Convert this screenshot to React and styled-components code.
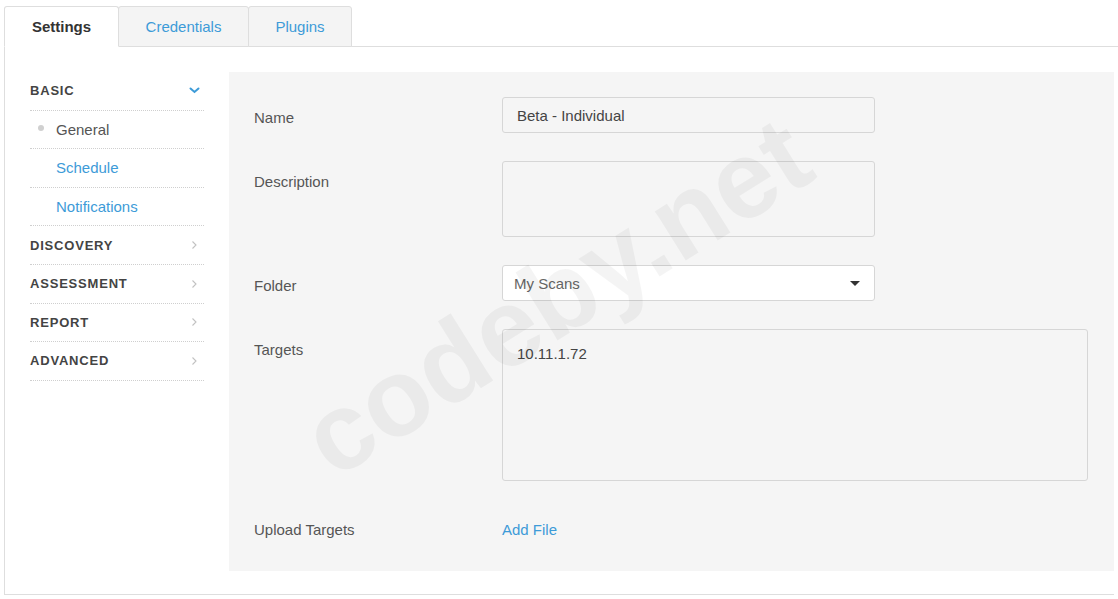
import styled, { createGlobalStyle } from 'styled-components';

const GlobalStyle = createGlobalStyle`
  html, body {
    margin: 0;
    padding: 0;
    background: #fff;
  }
  body {
    font-family: 'Liberation Sans', Arial, sans-serif;
    color: #555;
  }
`;

const Page = styled.div`
  position: relative;
  width: 1118px;
  height: 599px;
  padding: 6px 0 0 4px;
  box-sizing: border-box;
  overflow: hidden;
`;

const TabBar = styled.div`
  display: flex;
  margin-right: -4px;
  border-bottom: 1px solid #dedede;
  height: 40px;
`;

const Tab = styled.div`
  display: flex;
  align-items: center;
  justify-content: center;
  box-sizing: border-box;
  width: ${(p) => p.$w}px;
  height: 41px;
  margin-right: -1px;
  border: 1px solid #dedede;
  border-bottom: ${(p) => (p.$active ? '1px solid #fff' : '1px solid #dedede')};
  border-radius: 3px 3px 0 0;
  background: ${(p) => (p.$active ? '#fff' : '#f4f4f4')};
  color: ${(p) => (p.$active ? '#333' : '#3d9bd8')};
  font-size: 15px;
  font-weight: ${(p) => (p.$active ? 700 : 400)};
  position: relative;
  z-index: ${(p) => (p.$active ? 2 : 1)};
  cursor: pointer;
`;

const Card = styled.div`
  display: flex;
  width: 1110px;
  height: 548px;
  box-sizing: border-box;
  border-left: 1px solid #dedede;
  border-bottom: 1px solid #dedede;
  padding: 25px 0 23px 25px;
  gap: 25px;
`;

const Sidebar = styled.nav`
  width: 174px;
  flex-shrink: 0;
  display: flex;
  flex-direction: column;
`;

const NavRow = styled.div`
  display: flex;
  align-items: center;
  justify-content: space-between;
  height: 38.6px;
  box-sizing: border-box;
  border-bottom: 1px dotted #cfcfcf;
  padding-left: ${(p) => (p.$sub ? 26 : 0)}px;
  padding-right: 4px;
  position: relative;
`;

const SectionTitle = styled.span`
  font-size: 13px;
  font-weight: 700;
  letter-spacing: 0.8px;
  color: #444;
  text-transform: uppercase;
`;

const NavLink = styled.span`
  font-size: 15px;
  color: ${(p) => (p.$current ? '#555' : '#3d9bd8')};
  cursor: pointer;
`;

const Bullet = styled.span`
  position: absolute;
  left: 8px;
  top: 14px;
  width: 6px;
  height: 6px;
  border-radius: 50%;
  background: #d0d0d0;
`;

const Panel = styled.section`
  flex: 1;
  background: #f5f5f5;
  padding: 25px 26px 26px 25px;
  display: flex;
  flex-direction: column;
  gap: 28px;
`;

const FormRow = styled.div`
  display: flex;
  align-items: flex-start;
  min-height: 36px;
`;

const Label = styled.label`
  width: 248px;
  flex-shrink: 0;
  padding-top: 12px;
  font-size: 15px;
  line-height: 18px;
  color: #555;
`;

const Field = styled.div`
  box-sizing: border-box;
  width: ${(p) => p.$w}px;
  height: ${(p) => p.$h}px;
  border: 1px solid #d6d6d6;
  border-radius: 3px;
  background: ${(p) => (p.$white ? '#fff' : '#f5f5f5')};
  padding: ${(p) => p.$pad || '0 14px'};
  display: flex;
  align-items: ${(p) => (p.$top ? 'flex-start' : 'center')};
  justify-content: space-between;
  font-size: 15px;
  color: #444;
`;

const Placeholder = styled.span`
  color: #666;
`;

const Caret = styled.span`
  width: 0;
  height: 0;
  border-left: 5px solid transparent;
  border-right: 5px solid transparent;
  border-top: 5px solid #333;
  margin-right: 4px;
`;

const LinkText = styled.a`
  padding-top: 12px;
  font-size: 15px;
  line-height: 18px;
  color: #3d9bd8;
  text-decoration: none;
  cursor: pointer;
`;

const Watermark = styled.div`
  position: absolute;
  left: 556px;
  top: 296px;
  transform: translate(-50%, -50%) rotate(-32deg);
  font-family: 'Liberation Sans', Arial, sans-serif;
  font-weight: 700;
  font-size: 110px;
  color: rgba(0, 0, 0, 0.045);
  white-space: nowrap;
  pointer-events: none;
  user-select: none;
`;

const ChevronDown = () => (
  <svg width="11" height="7" viewBox="0 0 11 7">
    <path d="M1.5 1.5 L5.5 5 L9.5 1.5" fill="none" stroke="#3d9bd8" strokeWidth="2" strokeLinecap="round" />
  </svg>
);

const ChevronRight = () => (
  <svg width="10" height="10" viewBox="0 0 10 10" style={{ marginRight: 1 }}>
    <path d="M3.5 1.5 L7 5 L3.5 8.5" fill="none" stroke="#c2c2c2" strokeWidth="1.1" />
  </svg>
);

const sections = ['Discovery', 'Assessment', 'Report', 'Advanced'];

const App = () => {
  return (
    <>
      <GlobalStyle />
      <Page>
        <TabBar>
          <Tab $active $w={115}>Settings</Tab>
          <Tab $w={131}>Credentials</Tab>
          <Tab $w={104}>Plugins</Tab>
        </TabBar>
        <Card>
          <Sidebar>
            <NavRow>
              <SectionTitle>Basic</SectionTitle>
              <ChevronDown />
            </NavRow>
            <NavRow $sub>
              <Bullet />
              <NavLink $current>General</NavLink>
            </NavRow>
            <NavRow $sub>
              <NavLink>Schedule</NavLink>
            </NavRow>
            <NavRow $sub>
              <NavLink>Notifications</NavLink>
            </NavRow>
            {sections.map((s) => (
              <NavRow key={s}>
                <SectionTitle>{s}</SectionTitle>
                <ChevronRight />
              </NavRow>
            ))}
          </Sidebar>
          <Panel>
            <FormRow>
              <Label>Name</Label>
              <Field $w={373} $h={36}>Beta - Individual</Field>
            </FormRow>
            <FormRow>
              <Label>Description</Label>
              <Field $w={373} $h={76} />
            </FormRow>
            <FormRow>
              <Label>Folder</Label>
              <Field $w={373} $h={36} $white $pad="0 10px 0 11px">
                <Placeholder>My Scans</Placeholder>
                <Caret />
              </Field>
            </FormRow>
            <FormRow>
              <Label>Targets</Label>
              <Field $w={586} $h={152} $top $pad="15px 14px">10.11.1.72</Field>
            </FormRow>
            <FormRow>
              <Label>Upload Targets</Label>
              <LinkText>Add File</LinkText>
            </FormRow>
          </Panel>
        </Card>
        <Watermark>codeby.net</Watermark>
      </Page>
    </>
  );
};

export default App;
